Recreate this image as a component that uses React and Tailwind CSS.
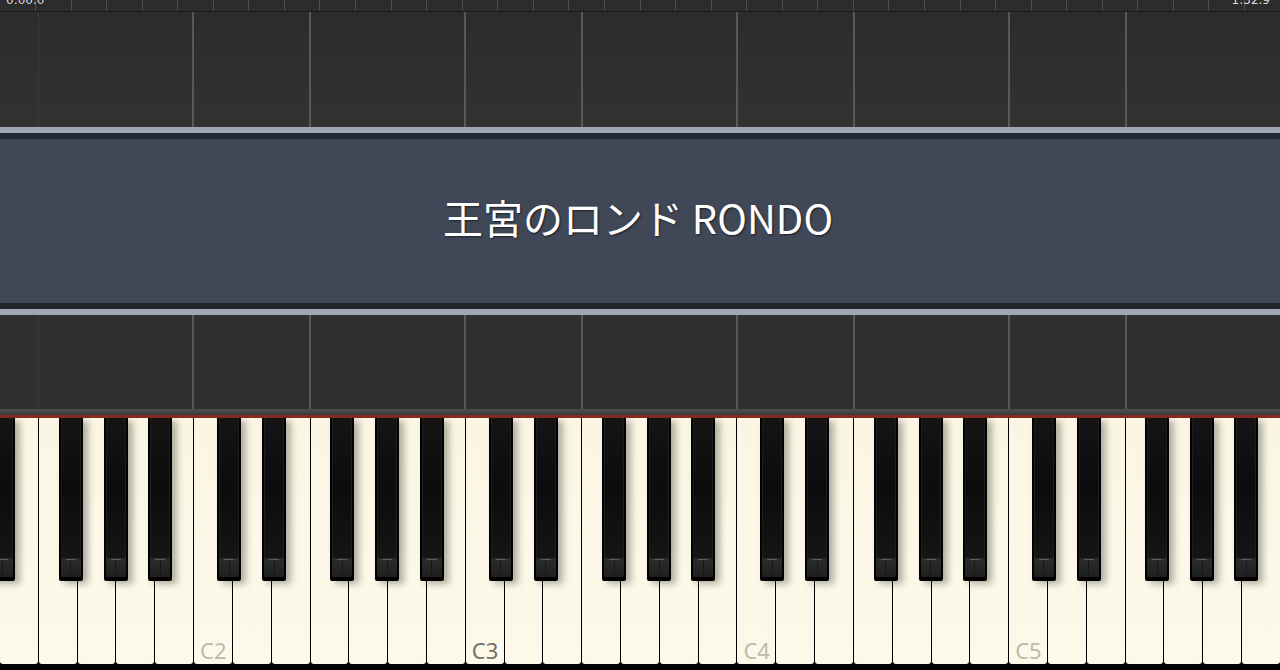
import React from "react";

const N = 33;
const W = 1280 / N;
const LETTERS = ["C", "D", "E", "F", "G", "A", "B"];
const BLACK_OFF = { C: 0.915, D: 1.075, F: 0.83, G: 0.99, A: 1.135 };

const whites = Array.from({ length: N }, (_, i) => {
  const k = i + 2;
  return { letter: LETTERS[k % 7], octave: 1 + Math.floor(k / 7) };
});

const blacks = [];
for (let i = -1; i < N; i++) {
  const k = i + 2;
  const letter = LETTERS[((k % 7) + 7) % 7];
  if (BLACK_OFF[letter] !== undefined) {
    const center = (i + BLACK_OFF[letter]) * W;
    if (center < 1280 + 12) blacks.push(center);
  }
}

const ticks = Array.from({ length: 35 }, (_, i) => 35 + 35.56 * i);

function GridArea({ className }) {
  return (
    <div className={"flex " + className}>
      {whites.map((w, i) => {
        let cls = "flex-1";
        if (w.letter === "C" || w.letter === "F") {
          cls += i === 1 ? " border-l border-[#3a3a3a]" : " border-l-2 border-[#585858]";
        }
        return <div key={i} className={cls} />;
      })}
    </div>
  );
}

function BlackKey({ center }) {
  return (
    <div
      className="absolute top-0 h-[163px] w-[24px] bg-black rounded-b-[2px] shadow-[5px_3px_7px_rgba(0,0,0,0.3)] flex flex-col px-[2px] pb-[4px]"
      style={{ left: center - 12 }}
    >
      <div className="flex-1 bg-gradient-to-b from-[#141414] via-[#0c0c0c] to-[#151515] border-x border-[#1e1e1e]" />
      <div className="h-[19px] bg-gradient-to-b from-[#2c2c2c] to-[#1f1f1f] flex flex-col items-center rounded-b-[1px]">
        <div className="w-[10px] h-px bg-[#5e5e5e] mt-[1px]" />
        <div className="w-px flex-1 bg-[#181818]" />
      </div>
    </div>
  );
}

export default function App() {
  return (
    <div
      className="w-[1280px] h-[670px] overflow-hidden flex flex-col bg-[#2f2f2f]"
      style={{ fontFamily: '"Noto Sans CJK JP", "Noto Sans", sans-serif' }}
    >
      {/* ruler */}
      <div className="relative h-[12px] bg-[#2c2c2c] border-b border-[#1c1c1c] overflow-hidden">
        {ticks.map((x, i) => (
          <div key={i} className="absolute top-0 h-full w-px bg-[#4e4e4e]" style={{ left: x }} />
        ))}
        <div className="absolute left-[6px] top-[-7px] text-[12px] leading-[14px] text-[#dcdcdc]" style={{ fontFamily: '"DejaVu Sans", sans-serif' }}>0:00.0</div>
        <div className="absolute right-[10px] top-[-7px] text-[12px] leading-[14px] text-[#dcdcdc]" style={{ fontFamily: '"DejaVu Sans", sans-serif' }}>1:32.9</div>
      </div>

      <GridArea className="h-[115px] bg-gradient-to-b from-[#2c2c2c] to-[#323232]" />

      {/* banner */}
      <div className="h-[6px] bg-[#a0a8b7]" />
      <div className="h-[6px] bg-[#232832]" />
      <div className="h-[164px] bg-[#404857] flex items-center justify-center">
        <div className="text-[40px] leading-none text-white [text-shadow:1px_1px_2px_rgba(0,0,0,0.6)] translate-y-[-4px] translate-x-[-2px]">
          王宮のロンド RONDO
        </div>
      </div>
      <div className="h-[6px] bg-[#1f242c]" />
      <div className="h-[6px] bg-[#a0a8b7]" />

      <GridArea className="h-[94px] bg-[#303030]" />

      {/* keyboard header */}
      <div className="h-[6px] bg-gradient-to-b from-[#505050] to-[#3a3a3a]" />
      <div className="h-[3px] bg-[#8a2a1f]" />

      {/* keyboard */}
      <div className="relative h-[252px] bg-black">
        <div className="flex gap-px h-[246px]">
          {whites.map((w, i) => (
            <div
              key={i}
              className="flex-1 rounded-b-[3px] bg-gradient-to-b from-[#fbf6e3] to-[#fdf9ea] flex items-end pl-[6px] pb-[3px]"
            >
              {w.letter === "C" && (
                <span
                  className={
                    "text-[22px] leading-none " +
                    (w.octave === 3 ? "text-[#75726a]" : "text-[#bdb9ad]")
                  }
                  style={{ fontFamily: '"Noto Sans", sans-serif' }}
                >
                  C{w.octave}
                </span>
              )}
            </div>
          ))}
        </div>
        {blacks.map((c, i) => (
          <BlackKey key={i} center={c} />
        ))}
      </div>
    </div>
  );
}
